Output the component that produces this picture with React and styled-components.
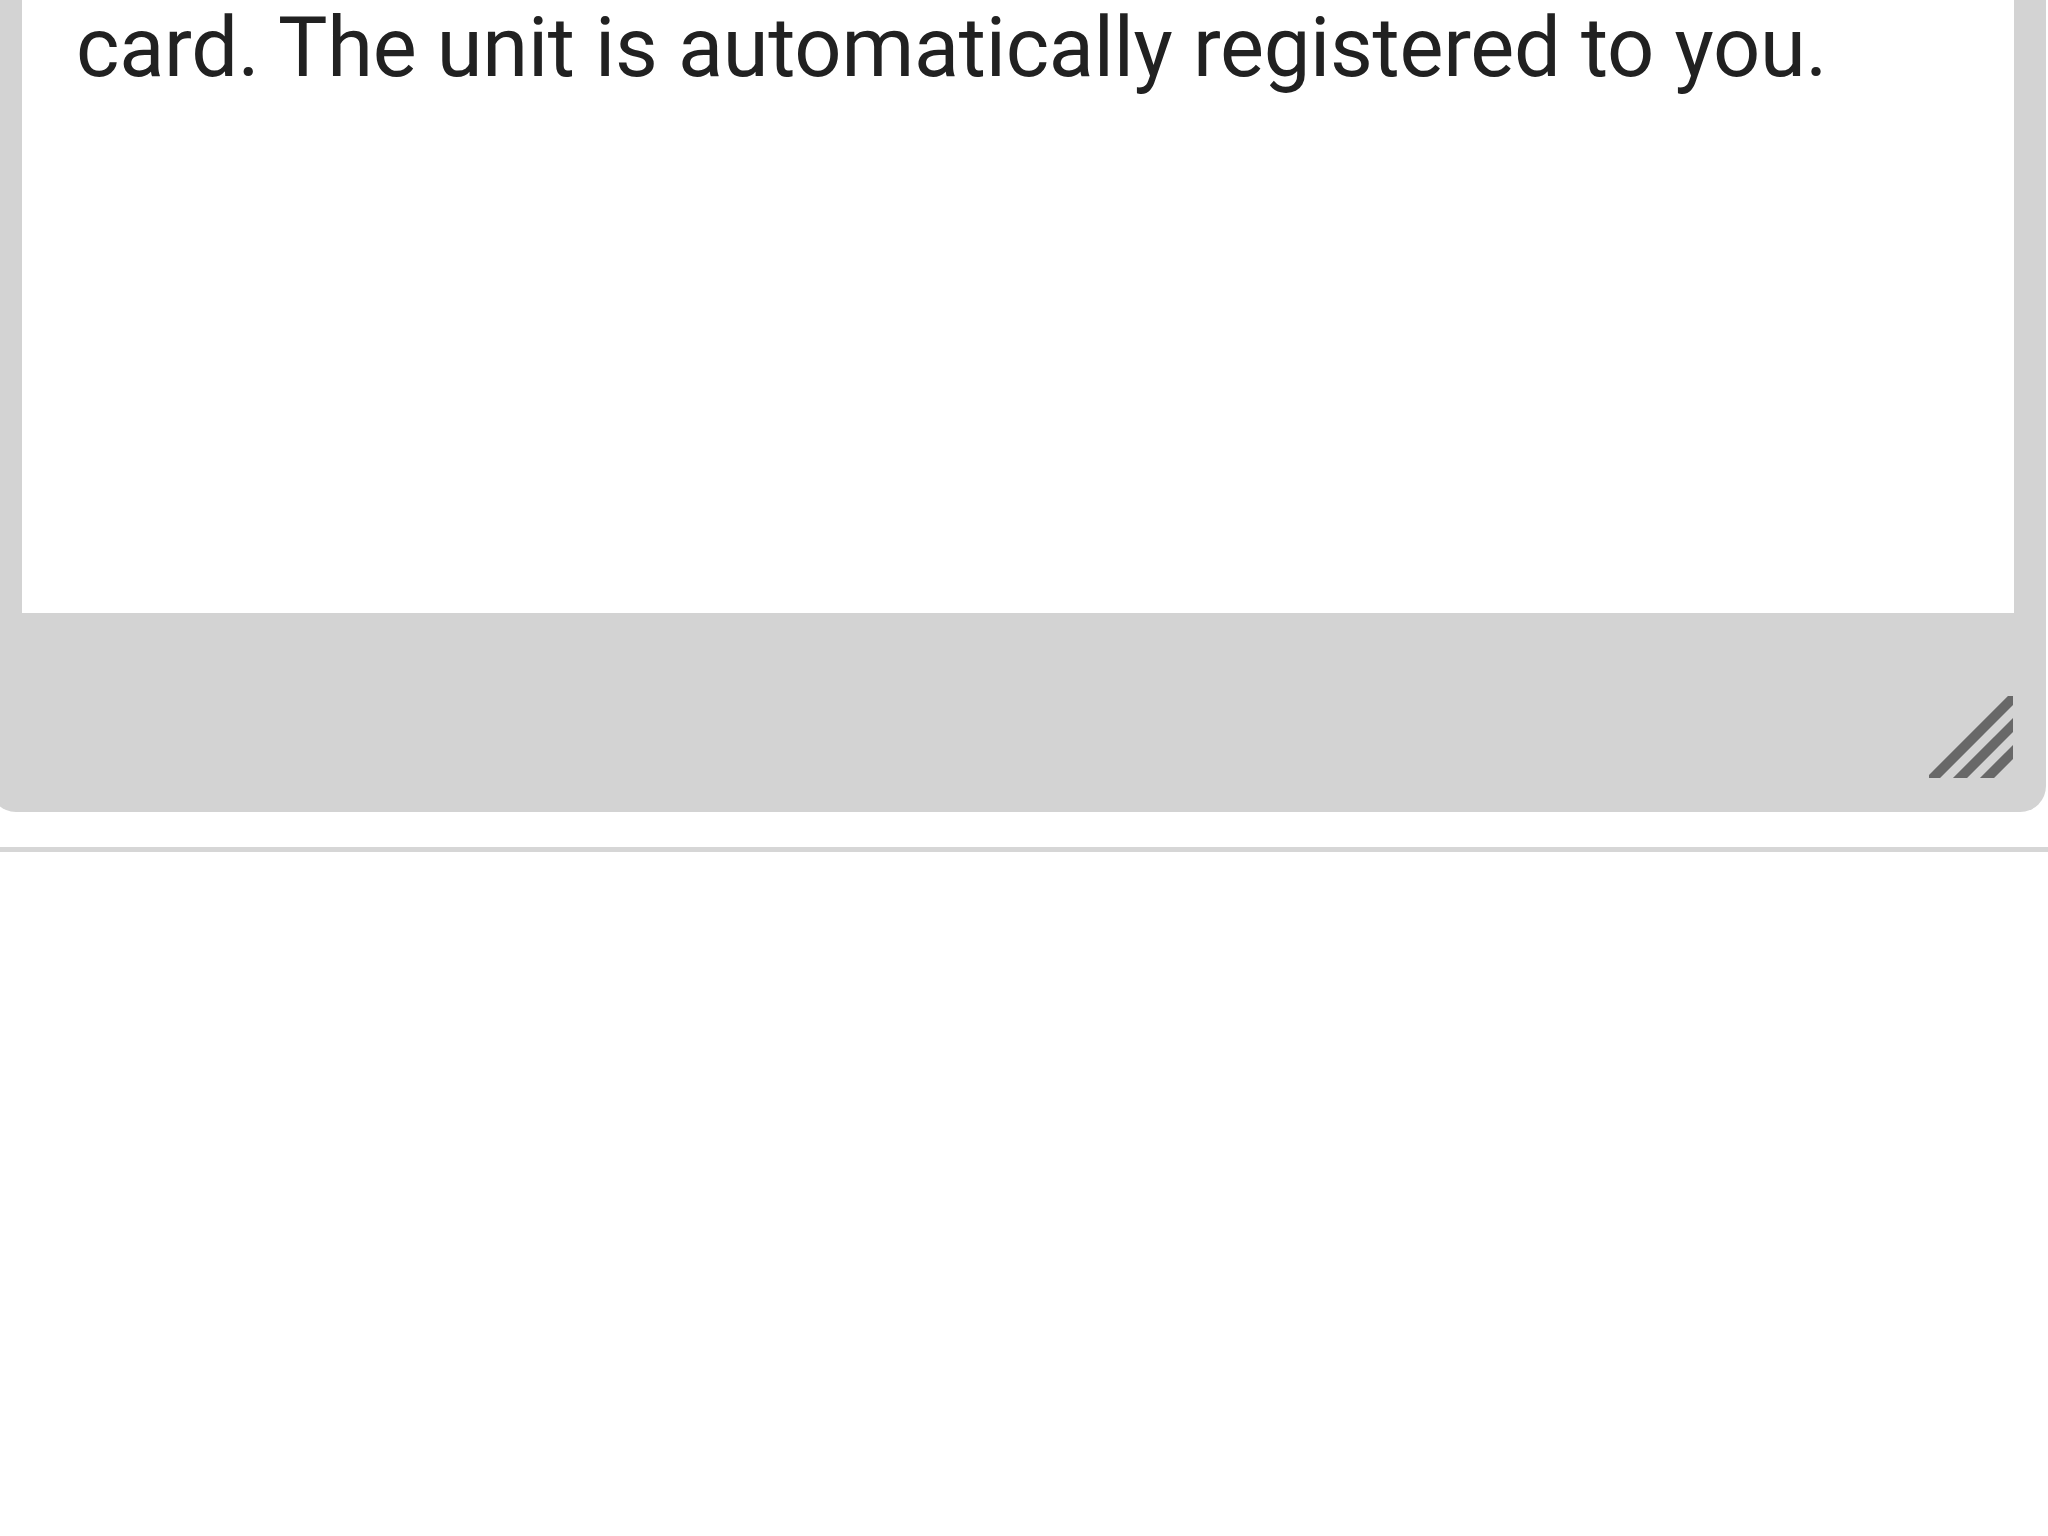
import styled, { createGlobalStyle } from "styled-components";

const GlobalStyles = createGlobalStyle`
  * {
    margin: 0;
    padding: 0;
    box-sizing: border-box;
  }
  html, body {
    background: #ffffff;
    font-family: Roboto, "Liberation Sans", sans-serif;
    overflow: hidden;
  }
`;

function ResizeGrip() {
  // three diagonal strokes, clipped square by the svg box
  return (
    <Grip width="84" height="82" viewBox="0 0 84 82">
      {[86, 113, 140].map((c) => (
        <line
          key={c}
          x1={c - 100}
          y1={100}
          x2={c + 10}
          y2={-10}
          stroke="#686868"
          strokeWidth="10"
        />
      ))}
    </Grip>
  );
}

function App() {
  return (
    <Page>
      <GlobalStyles />
      <Frame>
        <Field>
          <Message>card. The unit is automatically registered to you.</Message>
        </Field>
        <Footer>
          <ResizeGrip />
        </Footer>
      </Frame>
      <Divider />
    </Page>
  );
}

export default App;

const Page = styled.div`
  width: 2048px;
  height: 1536px;
  background: #ffffff;
  overflow: hidden;
`;

const Frame = styled.div`
  width: 2056px;
  margin-left: -10px;
  padding: 0 32px;
  background: #d3d3d3;
  border-radius: 0 0 26px 26px;
  display: flex;
  flex-direction: column;
`;

const Field = styled.div`
  height: 613px;
  background: #ffffff;
  padding: 0 54px;
`;

const Message = styled.p`
  font-size: 83px;
  line-height: 1.15;
  letter-spacing: -0.26px;
  color: #212121;
  white-space: nowrap;
`;

const Footer = styled.div`
  height: 199px;
  display: flex;
  justify-content: flex-end;
  align-items: flex-end;
  padding-bottom: 34px;
`;

const Grip = styled.svg`
  display: block;
  margin-right: 1px;
`;

const Divider = styled.div`
  margin-top: 35px;
  height: 5px;
  background: #d6d6d6;
`;
